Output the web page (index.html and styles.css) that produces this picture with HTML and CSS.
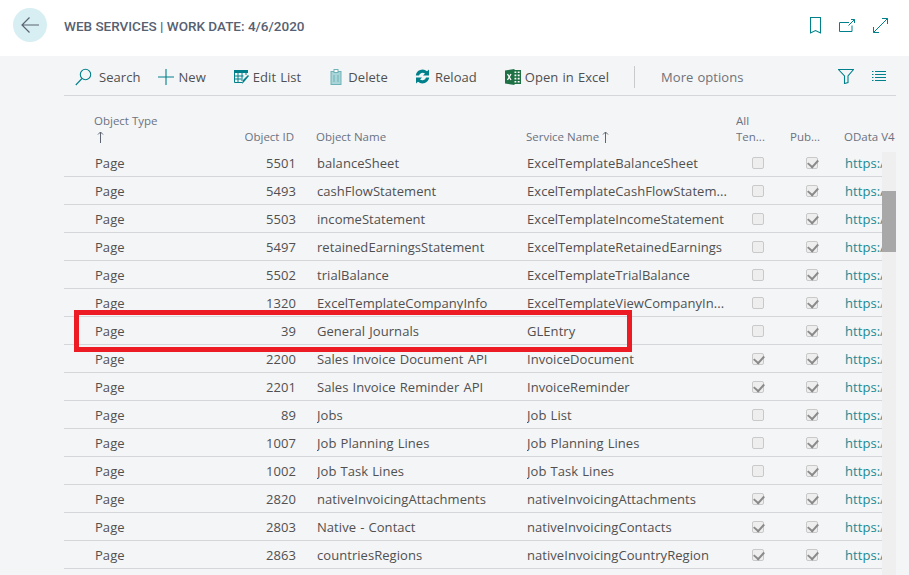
FILE: index.html
```html
<!DOCTYPE html>
<html lang="en">
<head>
<meta charset="utf-8">
<title>Web Services</title>
<link rel="stylesheet" href="styles.css">
</head>
<body>
<header class="topbar">
  <button class="back" aria-label="Back">
    <svg width="18" height="16" viewBox="0 0 18 16"><path d="M1 8h17M8.500 .5L1 8l7.500 7.500" fill="none" stroke="#5b6472" stroke-width="1.200"/></svg>
  </button>
  <h1 class="title">WEB SERVICES | WORK DATE: 4/6/2020</h1>
  <div class="top-icons">
    <svg width="11" height="17" viewBox="0 0 11 17"><path d="M.5.500h10v15.500l-5-2.500-5 2.500z" fill="none" stroke="#00808a" stroke-width="1.100"/></svg>
    <svg width="16" height="13" viewBox="0 0 16 13"><path d="M10 3.500H.5v9h12.500V6.500M9.500 6.500L15.500.5M12 .5h3.500V4" fill="none" stroke="#00808a" stroke-width="1"/></svg>
    <svg width="15" height="15" viewBox="0 0 15 15"><path d="M.5 14.500l14-14M9 .5h5.500V6M.5 9v5.500H6" fill="none" stroke="#00808a" stroke-width="1"/></svg>
  </div>
</header>
<main class="content">
  <nav class="toolbar">
    <span class="tool tool-search"><svg width="17" height="18" viewBox="0 0 17 18"><circle cx="10.500" cy="6.500" r="5.200" fill="none" stroke="#00808a" stroke-width="1.100"/><path d="M7 10.500L.8 17" stroke="#00808a" stroke-width="1.100"/></svg>Search</span>
    <span class="tool tool-new"><svg width="16" height="16" viewBox="0 0 16 16"><path d="M8 0v16M0 8h16" stroke="#00808a" stroke-width="1.100"/></svg>New</span>
    <span class="tool tool-edit"><svg width="15" height="14" viewBox="0 0 15 14"><path d="M0 0h14v3H0z" fill="#00808a"/><path d="M.5 3v9.500h8M.5 6h9M.5 9h7M4 3v9.500M8 3v8M12 3v2" fill="none" stroke="#00808a"/><path d="M8 14l1-4 5-5 1 1-5 6z" fill="#00808a"/></svg>Edit List</span>
    <span class="tool tool-delete"><svg width="12" height="16" viewBox="0 0 12 16"><rect x="1" y="2.500" width="10" height="13" fill="#a9d5d8" stroke="#6fb3b8"/><rect x="4" y=".5" width="4" height="3" fill="#fff" stroke="#6fb3b8"/><path d="M4 6v7M8 6v7" stroke="#6fb3b8"/></svg>Delete</span>
    <span class="tool tool-reload"><svg width="15" height="15" viewBox="0 0 15 15"><path d="M.8 6.500A6.800 6.800 0 0 1 12 2.300L14 .5V6.500H8l2-2A3.800 3.800 0 0 0 4 6.500z" fill="#00808a"/><path d="M14.200 8.500A6.800 6.800 0 0 1 3 12.700L1 14.500V8.500H7l-2 2A3.800 3.800 0 0 0 11 8.500z" fill="#00808a"/></svg>Reload</span>
    <span class="tool tool-excel"><svg width="16" height="16" viewBox="0 0 16 16"><rect x="6" y="1" width="10" height="14" fill="#fff"/><path d="M6 1.700h9.300v12.600H6M12 1v14M6 4.800h10M6 8h10M6 11.200h10" fill="none" stroke="#1e7145" stroke-width="1.400"/><path d="M0 1.500L9.500 0v16L0 14.500z" fill="#1e7145"/><path d="M2.500 5l3.500 6M6 5l-3.500 6" stroke="#fff" stroke-width="1.300"/></svg>Open in Excel</span>
    <span class="divider"></span>
    <span class="tool tool-more">More options</span>
    <span class="toolbar-right">
      <svg width="16" height="15" viewBox="0 0 16 15"><path d="M.5.500h15L10 7v6.500L6.500 14.500V7z" fill="none" stroke="#00808a" stroke-width="1.100"/></svg>
      <svg width="14" height="11" viewBox="0 0 14 11"><path d="M0 .5h1.500M3 .5h11M0 3.500h1.500M3 3.500h11M0 6.500h1.500M3 6.500h11M0 9.500h1.500M3 9.500h11" stroke="#00808a"/></svg>
    </span>
  </nav>

  <div class="grid-wrap">
    <div class="row head">
      <span>Object Type<br><svg class="sort sort-type" width="7" height="12" viewBox="0 0 7 12"><path d="M3.500 12V1M1 3.500L3.500 1 6 3.500" fill="none" stroke="#5f6672"/></svg></span>
      <span class="num">Object ID</span>
      <span>Object Name</span>
      <span>Service Name <svg class="sort" width="7" height="12" viewBox="0 0 7 12"><path d="M3.500 12V1M1 3.500L3.500 1 6 3.500" fill="none" stroke="#5f6672"/></svg></span>
      <span>All<br>Ten...</span>
      <span>Pub...</span>
      <span>OData V4</span>
    </div>
    <div class="body">
      <div class="rows">
        <div class="row"><span>Page</span><span class="num">5501</span><span>balanceSheet</span><span>ExcelTemplateBalanceSheet</span><i class="cb"></i><i class="cb on"></i><span class="link">https:/</span></div>
        <div class="row"><span>Page</span><span class="num">5493</span><span>cashFlowStatement</span><span>ExcelTemplateCashFlowStatem...</span><i class="cb"></i><i class="cb on"></i><span class="link">https:/</span></div>
        <div class="row"><span>Page</span><span class="num">5503</span><span>incomeStatement</span><span>ExcelTemplateIncomeStatement</span><i class="cb"></i><i class="cb on"></i><span class="link">https:/</span></div>
        <div class="row"><span>Page</span><span class="num">5497</span><span>retainedEarningsStatement</span><span>ExcelTemplateRetainedEarnings</span><i class="cb"></i><i class="cb on"></i><span class="link">https:/</span></div>
        <div class="row"><span>Page</span><span class="num">5502</span><span>trialBalance</span><span>ExcelTemplateTrialBalance</span><i class="cb"></i><i class="cb on"></i><span class="link">https:/</span></div>
        <div class="row"><span>Page</span><span class="num">1320</span><span>ExcelTemplateCompanyInfo</span><span>ExcelTemplateViewCompanyIn...</span><i class="cb"></i><i class="cb on"></i><span class="link">https:/</span></div>
        <div class="row"><span>Page</span><span class="num">39</span><span>General Journals</span><span>GLEntry</span><i class="cb"></i><i class="cb on"></i><span class="link">https:/</span></div>
        <div class="row"><span>Page</span><span class="num">2200</span><span>Sales Invoice Document API</span><span>InvoiceDocument</span><i class="cb on"></i><i class="cb on"></i><span class="link">https:/</span></div>
        <div class="row"><span>Page</span><span class="num">2201</span><span>Sales Invoice Reminder API</span><span>InvoiceReminder</span><i class="cb on"></i><i class="cb on"></i><span class="link">https:/</span></div>
        <div class="row"><span>Page</span><span class="num">89</span><span>Jobs</span><span>Job List</span><i class="cb"></i><i class="cb on"></i><span class="link">https:/</span></div>
        <div class="row"><span>Page</span><span class="num">1007</span><span>Job Planning Lines</span><span>Job Planning Lines</span><i class="cb"></i><i class="cb on"></i><span class="link">https:/</span></div>
        <div class="row"><span>Page</span><span class="num">1002</span><span>Job Task Lines</span><span>Job Task Lines</span><i class="cb"></i><i class="cb on"></i><span class="link">https:/</span></div>
        <div class="row"><span>Page</span><span class="num">2820</span><span>nativeInvoicingAttachments</span><span>nativeInvoicingAttachments</span><i class="cb on"></i><i class="cb on"></i><span class="link">https:/</span></div>
        <div class="row"><span>Page</span><span class="num">2803</span><span>Native - Contact</span><span>nativeInvoicingContacts</span><i class="cb on"></i><i class="cb on"></i><span class="link">https:/</span></div>
        <div class="row"><span>Page</span><span class="num">2863</span><span>countriesRegions</span><span>nativeInvoicingCountryRegion</span><i class="cb on"></i><i class="cb on"></i><span class="link">https:/</span></div>
      </div>
      <div class="scrollbar"><div class="thumb"></div></div>
    </div>
    <div class="highlight"></div>
  </div>
</main>
</body>
</html>
```
FILE: styles.css
```css
* { box-sizing: border-box; }
html, body { margin: 0; height: 100%; overflow: hidden; }
body { background: #f4f5f7; color: #505050; font: 13px/18px "Open Sans", sans-serif; letter-spacing: .05px; word-spacing: .7px; width: 909px; height: 575px; }
.topbar { height: 56px; background: #fff; display: flex; align-items: center; padding: 0 21px 6px 13px; }
.back { width: 34px; height: 34px; border-radius: 50%; background: #d7eff2; border: 0; padding: 0; display: flex; align-items: center; justify-content: center; }
.title { margin: 2px 0 0 17px; font: 500 13.5px/20px Roboto, sans-serif; color: #566172; letter-spacing: 0; word-spacing: 0; flex: 1; }
.top-icons { display: flex; align-items: center; gap: 18px; }
.content { padding: 0 13px 0 64px; }
.toolbar { height: 40px; border-bottom: 1px solid #d4d6da; display: flex; align-items: center; padding: 2px 10px 0 11px; }
.tool { display: flex; align-items: center; gap: 7px; }
.tool-new { margin-left: 18px; gap: 4px; }
.tool-edit { margin-left: 28px; gap: 4px; }
.tool-delete { margin-left: 29px; gap: 6px; }
.tool-reload { margin-left: 27px; gap: 5px; }
.tool-excel { margin-left: 28px; gap: 4px; }
.divider { width: 1px; height: 22px; background: #c8cace; margin-left: 25px; }
.tool-more { margin-left: 26px; color: #6e7278; }
.toolbar-right { margin-left: auto; display: flex; align-items: center; gap: 18px; }
.grid-wrap { position: relative; }
.row { display: grid; grid-template-columns: 31px 101px 100px 21px 210px 225px 54px 39px 37px; height: 28px; align-items: center; border-bottom: 1px solid #d4d6da; white-space: nowrap; }
.row > :first-child { grid-column: 2; }
.row > .num { grid-column: 3; justify-self: end; }
.row > span { overflow: hidden; }
.row > :nth-child(3) { grid-column: 5; }
.head { grid-template-columns: 30px 101px 99px 22px 210px 210px 54px 54px 52px; height: 53px; border-bottom: 0; align-items: end; padding-bottom: 4px; font-size: 11.5px; line-height: 16px; letter-spacing: 0; word-spacing: 0; color: #6b7280; }
.sort { vertical-align: -2px; }
.sort-type { margin-left: 3px; }
.body { display: flex; align-items: flex-start; }
.rows { width: 818px; }
.link { color: #1a8a93; }
.cb { width: 12px; height: 12px; border: 1px solid #c9c9c9; border-radius: 2px; background: #eeeeee; display: block; position: relative; }
.cb.on::after { content: ""; position: absolute; left: 1px; top: 1px; width: 8px; height: 5px; border-left: 2.5px solid #8a8a8a; border-bottom: 2.5px solid #8a8a8a; transform: rotate(-48deg); }
.scrollbar { width: 14px; height: 423px; margin-top: 3px; background: #efefef; }
.thumb { height: 61px; margin-top: 39px; background: #a8a8a8; }
.highlight { position: absolute; left: 10px; top: 214px; width: 558px; height: 42px; border: 5px solid #ed1c24; pointer-events: none; }
```
